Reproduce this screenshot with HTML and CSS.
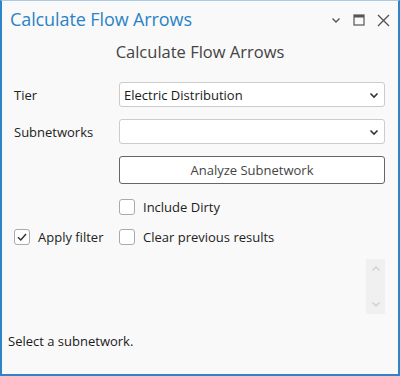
FILE: index.html
```html
<!DOCTYPE html>
<html lang="en">
<head>
    <meta charset="UTF-8">
    <meta name="viewport" content="width=device-width, initial-scale=1.0">
    <title>Calculate Flow Arrows</title>
    <link rel="stylesheet" href="styles.css">
</head>
<body>
    <div class="pane">
        <div class="titlebar">
            <div class="pane-title">Calculate Flow Arrows</div>
            <div class="pane-tools">
                <svg class="tool" width="10" height="10" viewBox="0 0 10 10"><path d="M1.5 3.5 L5 7 L8.5 3.5" fill="none" stroke="#555" stroke-width="1.4"/></svg>
                <svg class="tool" width="12" height="12" viewBox="0 0 12 12"><rect x="1" y="1" width="10" height="10" fill="none" stroke="#555" stroke-width="1.2"/><rect x="1" y="1" width="10" height="2.5" fill="#555"/></svg>
                <svg class="tool" width="13" height="13" viewBox="0 0 13 13"><path d="M1 1 L12 12 M12 1 L1 12" fill="none" stroke="#555" stroke-width="1.4"/></svg>
            </div>
        </div>

        <div class="heading">Calculate Flow Arrows</div>

        <div class="form">
            <label class="field-label">Tier</label>
            <div class="combo">
                <span>Electric Distribution</span>
                <svg width="10" height="10" viewBox="0 0 10 10"><path d="M1.5 3.5 L5 7 L8.5 3.5" fill="none" stroke="#333" stroke-width="1.6"/></svg>
            </div>

            <label class="field-label">Subnetworks</label>
            <div class="combo">
                <span></span>
                <svg width="10" height="10" viewBox="0 0 10 10"><path d="M1.5 3.5 L5 7 L8.5 3.5" fill="none" stroke="#333" stroke-width="1.6"/></svg>
            </div>

            <div></div>
            <button class="action-btn">Analyze Subnetwork</button>

            <div></div>
            <label class="check first-check"><span class="box"></span>Include Dirty</label>

            <label class="check"><span class="box checked">
                <svg width="12" height="12" viewBox="0 0 12 12"><path d="M2 6.3 L4.8 9 L10 3" fill="none" stroke="#333" stroke-width="1.5"/></svg>
            </span>Apply filter</label>
            <label class="check"><span class="box"></span>Clear previous results</label>
        </div>

        <div class="results">
            <div class="scroller">
                <svg width="10" height="10" viewBox="0 0 10 10"><path d="M1.5 6.5 L5 3 L8.5 6.5" fill="none" stroke="#ccc" stroke-width="1.2"/></svg>
                <svg width="10" height="10" viewBox="0 0 10 10"><path d="M1.5 3.5 L5 7 L8.5 3.5" fill="none" stroke="#ccc" stroke-width="1.2"/></svg>
            </div>
        </div>

        <div class="status">Select a subnetwork.</div>
    </div>
</body>
</html>
```

FILE: styles.css
```css
body {
    margin: 0;
    font-family: 'Open Sans', 'Noto Sans', sans-serif;
    color: #333;
}

.pane {
    width: 400px;
    height: 376px;
    box-sizing: border-box;
    background: #f9f9f9;
    border: 2px solid #2f84c6;
    border-top: 1px solid #a9cbe6;
    display: flex;
    flex-direction: column;
}

.titlebar {
    display: flex;
    align-items: center;
    justify-content: space-between;
    height: 36px;
    padding: 0 8px 0 8px;
}

.pane-title {
    color: #2a82c7;
    font-size: 18px;
    letter-spacing: -0.1px;
}

.pane-tools {
    display: flex;
    align-items: center;
    gap: 12px;
    padding-top: 2px;
}

.heading {
    text-align: center;
    font-size: 16.5px;
    color: #444;
    height: 34px;
    line-height: 30px;
}

.form {
    display: grid;
    grid-template-columns: 105px 1fr;
    align-items: center;
    row-gap: 12px;
    padding: 11px 13px 0 12px;
}

.field-label {
    font-size: 13px;
    color: #222;
}

.combo {
    height: 25px;
    box-sizing: border-box;
    background: #fff;
    border: 1px solid #ccc;
    border-radius: 3px;
    display: flex;
    align-items: center;
    justify-content: space-between;
    padding: 0 5px 0 4px;
    font-size: 13px;
    color: #1a1a1a;
}

.action-btn {
    height: 28px;
    background: #fff;
    border: 1px solid #666;
    border-radius: 3px;
    font-family: inherit;
    font-size: 13px;
    color: #444;
    cursor: pointer;
}

.check {
    display: flex;
    align-items: center;
    gap: 8px;
    font-size: 13px;
    color: #222;
}

.first-check {
    margin-top: 2px;
}

.box {
    width: 16px;
    height: 16px;
    box-sizing: border-box;
    background: #fff;
    border: 1px solid #aaa;
    border-radius: 3px;
    display: flex;
    align-items: center;
    justify-content: center;
}

.results {
    display: flex;
    justify-content: flex-end;
    padding: 13px 13px 0 0;
}

.scroller {
    width: 19px;
    height: 55px;
    background: #f0f0f0;
    display: flex;
    flex-direction: column;
    align-items: center;
    justify-content: space-between;
    padding: 5px 0;
    box-sizing: border-box;
}

.status {
    font-size: 13px;
    color: #1a1a1a;
    padding: 18px 0 0 6px;
}
```
